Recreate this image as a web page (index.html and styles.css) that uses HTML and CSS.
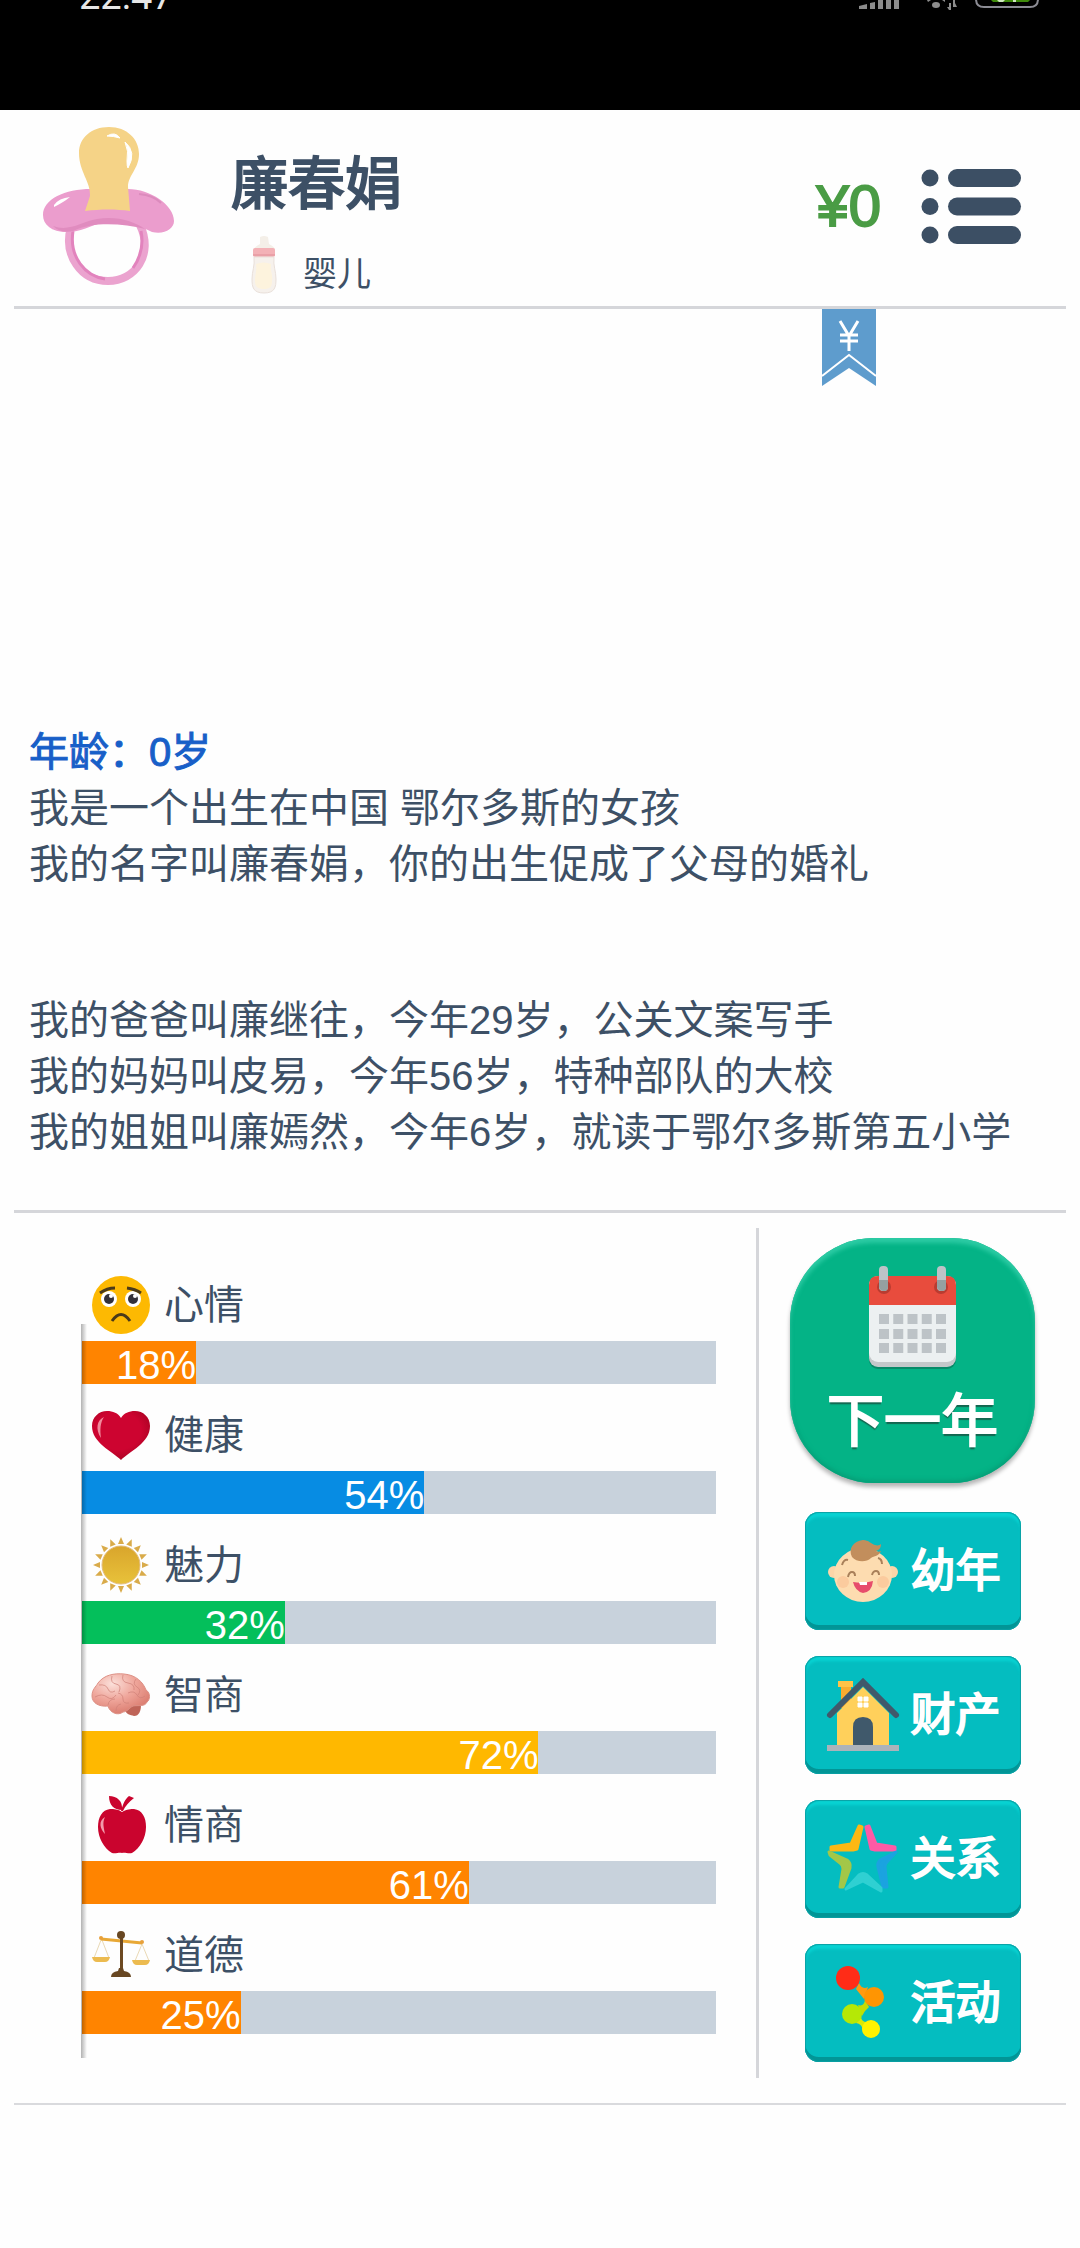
FILE: index.html
```html
<!DOCTYPE html>
<html lang="zh-CN">
<head>
<meta charset="utf-8">
<meta name="viewport" content="width=device-width, initial-scale=1">
<title>人生模拟</title>
<link rel="stylesheet" href="styles.css">
</head>
<body>
<div class="statusbar">
  <span class="clock">22:47</span>
  <svg class="status-icons" width="182" height="12" viewBox="0 0 182 12" aria-hidden="true">
    <g fill="#8c8c8c">
      <path d="M0 6l8-2v5H0zM11 3l5-1v7h-5zM19 0h5v9h-5zM27 0h5v9h-5zM35 0h5v9h-5z"/>
      <ellipse cx="77" cy="5" rx="4" ry="3"/>
      <path d="M68 0h4l-3 2zM83 0h3v2z"/>
      <path d="M90 3h2v7h-2l-2-3h2zM94 0v7h4l-2-4v-3z"/>
    </g>
    <path d="M117-6h62v5q0 8-8 8h-46q-8 0-8-8z" fill="none" stroke="#8c8c94" stroke-width="2"/>
    <path d="M130-2h43l-4 4h-35z" fill="#3f8a0b"/>
    <path d="M138 0h8l-2 2h-4zM154 0h3v2h-3z" fill="#cfe8c0"/>
  </svg>
</div>

<header class="profile">
  <svg class="avatar" width="132" height="158" viewBox="0 0 132 158" aria-hidden="true">
    <path d="M28 100C20 128 38 154 65 154S111 128 97 98" fill="none" stroke="#eba3cf" stroke-width="8"/>
    <path d="M30 104C26 130 42 149 62 152M98 104q4 20-8 37" fill="none" stroke="#e283bd" stroke-width="3"/>
    <path d="M0 88C0 72 22 62 48 62h37c22 0 46 16 46 32 0 8-10 14-22 11-14-7-28-10-42-10-16 0-24 9-40 10C9 106 0 98 0 88z" fill="#eb9dcd"/>
    <path d="M10 99c16 6 28-4 44-7 20-3 36 2 48 10-22-5-50-8-72 2-8 2-15 0-20-5z" fill="#e08cbf"/>
    <path d="M42 84l5-15c1-14-11-24-11-43C36 11 48 0 66 0s30 12 30 27c0 15-11 21-11 33l2 24c-14-2-29-2-45 0z" fill="#f5d387"/>
    <path d="M64 9q8-5 13 2-7-2-13-2zM82 15q12 10 3 26-1-1-1-7 2-10-2-19z" fill="#fff" stroke="#fff"/>
    <path d="M11 78q5-7 16-8-6 5-16 10z" fill="#fff"/>
    <path d="M96 67q14 1 22 9" fill="none" stroke="#dc8bbd" stroke-width="2"/>
  </svg>
  <div class="who">
    <h1 class="name">廉春娟</h1>
    <p class="stage">
      <svg width="26" height="58" viewBox="0 0 26 58" aria-hidden="true">
        <path d="M9 1q4-2 8 0l1 7c4 2 6 4 6 6H3c0-2 2-4 6-6z" fill="#f4efe8"/>
        <rect x="2" y="12" width="22" height="9" rx="2" fill="#f3b1b6"/>
        <path d="M2 19h22" stroke="#e08f98"/>
        <path d="M3 21h20c-1 9 2 14 2 22 0 8-1 14-12 14S1 51 1 43c0-8 3-13 2-22z" fill="#f6f1ec" stroke="#e9e0da"/>
        <path d="M5 28q8-3 15 0c-1 8 2 10 1 17 0 6-2 8-8 8s-9-2-9-8c0-7 2-9 1-17z" fill="#fdf3dd"/>
      </svg>
      <span>婴儿</span>
    </p>
  </div>
  <span class="money">¥0</span>
  <button class="menu" type="button" aria-label="菜单">
    <svg width="101" height="75" viewBox="0 0 101 75" fill="#3c4f64" aria-hidden="true">
      <circle cx="9" cy="9" r="8.5"/><circle cx="9" cy="37.5" r="8.5"/><circle cx="9" cy="66" r="8.5"/>
      <rect x="27" width="73" height="18" rx="9"/><rect x="27" y="28.5" width="73" height="18" rx="9"/><rect x="27" y="57" width="73" height="18" rx="9"/>
    </svg>
  </button>
</header>

<main class="log">
  <svg class="ribbon" width="54" height="77" viewBox="0 0 54 77" aria-hidden="true">
    <path d="M0 0h54v77L27 59 0 77z" fill="#5e9ccd"/>
    <path d="M0 67l27-21 27 21" fill="none" stroke="#fff" stroke-width="2"/>
    <path d="M18 12l9 15 9-15M27 26v16M18 26h18M18 32h18" fill="none" stroke="#fff" stroke-width="3"/>
  </svg>
  <h2 class="age">年龄：0岁</h2>
  <p>我是一个出生在中国 鄂尔多斯的女孩</p>
  <p>我的名字叫廉春娟，你的出生促成了父母的婚礼</p>
  <p class="family">我的爸爸叫廉继往，今年29岁，公关文案写手</p>
  <p>我的妈妈叫皮易，今年56岁，特种部队的大校</p>
  <p>我的姐姐叫廉嫣然，今年6岁，就读于鄂尔多斯第五小学</p>
</main>

<section class="panel">
  <ul class="stats">
    <li class="stat">
      <div class="stat-head">
        <svg width="58" height="58" viewBox="0 0 58 58" aria-hidden="true">
          <circle cx="29" cy="29" r="29" fill="#fdb902"/>
          <circle cx="17" cy="23" r="8" fill="#fff"/><circle cx="41" cy="23" r="8" fill="#fff"/>
          <circle cx="17" cy="23" r="5" fill="#33313a"/><circle cx="41" cy="23" r="5" fill="#33313a"/>
          <circle cx="19" cy="20" r="2" fill="#fff"/><circle cx="43" cy="20" r="2" fill="#fff"/>
          <path d="M8 17q7-5 15-5M35 12q8 1 14 5M20 45q9-13 18 0" fill="none" stroke="#4a3a1a" stroke-width="3"/>
        </svg>
        <span>心情</span>
      </div>
      <div class="track"><div class="fill orange" style="width:18%">18%</div></div>
    </li>
    <li class="stat">
      <div class="stat-head">
        <svg width="58" height="58" viewBox="0 0 58 58" aria-hidden="true">
          <defs><radialGradient id="heart" cx=".45" cy=".4" r=".65"><stop offset=".6" stop-color="#cd0430"/><stop offset="1" stop-color="#a60322"/></radialGradient></defs>
          <path d="M29 54C20 45 0 37 0 20 0 11 7 5 15 5c6 0 11 2 14 7 3-5 8-7 14-7 8 0 15 6 15 15 0 17-20 25-29 34z" fill="url(#heart)"/>
          <path d="M12 11c-7 3-9 12-3 21-1-8-1-15 3-21z" fill="#f08a9c"/>
        </svg>
        <span>健康</span>
      </div>
      <div class="track"><div class="fill blue" style="width:54%">54%</div></div>
    </li>
    <li class="stat">
      <div class="stat-head">
        <svg width="58" height="58" viewBox="-29 -29 58 58" aria-hidden="true">
          <defs>
            <linearGradient id="sun" x1="0" y1="0" x2="0" y2="1"><stop offset="0" stop-color="#d9a52c"/><stop offset="1" stop-color="#e8c23a"/></linearGradient>
            <g id="rays"><path id="ray" d="M-3-21L0-28l3 7z"/><use href="#ray" transform="rotate(22.5)"/><use href="#ray" transform="rotate(45)"/><use href="#ray" transform="rotate(67.5)"/></g>
          </defs>
          <g fill="#d9ab4a"><use href="#rays"/><use href="#rays" transform="rotate(90)"/><use href="#rays" transform="rotate(180)"/><use href="#rays" transform="rotate(270)"/></g>
          <circle r="19" fill="url(#sun)" stroke="#e3bb78"/>
        </svg>
        <span>魅力</span>
      </div>
      <div class="track"><div class="fill green" style="width:32%">32%</div></div>
    </li>
    <li class="stat">
      <div class="stat-head">
        <svg width="58" height="58" viewBox="0 0 58 58" aria-hidden="true">
          <defs><radialGradient id="brain" cx=".35" cy=".25" r=".8"><stop offset="0" stop-color="#fbe0da"/><stop offset=".5" stop-color="#efa69b"/><stop offset="1" stop-color="#d9796c"/></radialGradient></defs>
          <path d="M33 44c4-5 10-7 16-5 0 6-2 11-7 11-4-1-8-2-9-6z" fill="#bf6458"/>
          <path d="M16 40C7 41 0 37 0 30c0-7 4-9 6-13C12 9 22 7 32 8c12 1 19 8 22 16 5 3 4 10 1 12-2 5-9 3-14 4-4 2-6 6-10 6-5 4-13 1-15-6z" fill="url(#brain)" stroke="#dd9186"/>
          <path d="M7 19q7-1 9 4t7 2M20 10q-2 7 4 8t3 8M31 9q-2 7 5 8t6 7M44 13q-4 5 1 8t1 8M3 31q7-4 12 0t9-2M26 27q5 1 5 6t6 4M36 27q6-3 9 2t8 1M16 39q1-6 7-6M24 45q0-6 5-7" fill="none" stroke="#cf8077" stroke-opacity=".7"/>
        </svg>
        <span>智商</span>
      </div>
      <div class="track"><div class="fill amber" style="width:72%">72%</div></div>
    </li>
    <li class="stat">
      <div class="stat-head">
        <svg width="58" height="58" viewBox="0 0 58 58" aria-hidden="true">
          <g fill="#ca042e">
            <path d="M17 0c8 0 14 5 13 14-8 0-13-5-13-14zM29 15C31 8 33 3 37 0l5 2c-5 4-9 8-11 13z"/>
            <path d="M30 16c5-3 9-3 12-3 8 1 12 8 12 18 0 11-6 21-14 26-4 1-7-1-10 0-3-1-6 1-10 0C12 52 6 42 6 31c0-10 4-17 12-18 4 0 8 0 12 3z"/>
          </g>
          <path d="M13 21c-7 4-5 12 0 17-1-6-3-11 0-17z" fill="#f29bab"/>
        </svg>
        <span>情商</span>
      </div>
      <div class="track"><div class="fill orange" style="width:61%">61%</div></div>
    </li>
    <li class="stat">
      <div class="stat-head">
        <svg width="58" height="58" viewBox="0 0 58 58" aria-hidden="true">
          <path d="M9 14L2 32M10 14l7 18M50 18l-7 17M50 18l7 17" fill="none" stroke="#ead9b5"/>
          <path d="M9 13l41 4" stroke="#e8a836" stroke-width="3"/>
          <circle cx="9" cy="12" r="2" fill="#e8a03a"/><circle cx="50" cy="16" r="2" fill="#e8a03a"/>
          <path d="M0 31h18q-1 5-5 5H5q-4 0-5-5zM40 34h18q-1 5-5 5h-8q-4 0-5-5z" fill="#ecbb50"/>
          <path d="M28 10h3v33h-3z" fill="#6d4a22"/><circle cx="29" cy="9" r="4" fill="#684722"/>
          <path d="M19 51q0-5 7-6l1-3h4l1 3q7 1 7 6z" fill="#684722"/>
        </svg>
        <span>道德</span>
      </div>
      <div class="track"><div class="fill orange" style="width:25%">25%</div></div>
    </li>
  </ul>

  <nav class="actions">
    <button class="next" type="button">
      <svg width="87" height="104" viewBox="0 0 87 104" aria-hidden="true">
        <rect y="14" width="87" height="89" rx="9" fill="#078a68"/>
        <rect y="14" width="87" height="87" rx="9" fill="#c4c8ca"/>
        <rect y="10" width="87" height="86" rx="9" fill="#ecf0f1"/>
        <path d="M0 39V19q0-9 9-9h69q9 0 9 9v20z" fill="#e84c3d"/>
        <circle cx="15" cy="21" r="7" fill="#b93c31"/><circle cx="72" cy="21" r="7" fill="#b93c31"/>
        <rect x="10" width="9" height="25" rx="4" fill="#bdc3c7"/><rect x="68" width="9" height="25" rx="4" fill="#bdc3c7"/>
        <path d="M10 14h9v7q0 4-4 4t-5-4zM68 14h9v7q0 4-4 4t-5-4z" fill="#95a0a1"/>
        <path d="M10 53h67M10 68h67M10 82h67" stroke="#bdc3c7" stroke-width="10" stroke-dasharray="10 4.25"/>
      </svg>
      <span>下一年</span>
    </button>
    <button class="action" type="button">
      <svg width="72" height="72" viewBox="0 0 72 72" aria-hidden="true">
        <circle cx="7" cy="38" r="6" fill="#fcd5a8"/><circle cx="65" cy="38" r="6" fill="#fcd5a8"/>
        <ellipse cx="36" cy="41" rx="29" ry="27" fill="#fddcb0"/>
        <circle cx="16" cy="48" r="6" fill="#fbcb9e"/><circle cx="56" cy="48" r="6" fill="#fbcb9e"/>
        <path d="M25 23C21 15 26 7 36 6c6 0 8 4 12 5 3 1 5 0 6-1 0 4-2 6-5 7 2 1 3 1 5 0-2 5-7 5-10 7-5 5-15 4-19-1z" fill="#c28e5c"/>
        <path d="M15 31q2-6 6-5M51 24q4 1 4 6M21 43q1-5 4-5t3 4M45 41q1-4 4-4t3 4" fill="none" stroke="#a9805a" stroke-width="2"/>
        <path d="M26 48q10 2 20-1-1 11-10 12-8-2-10-11z" fill="#e74c6c"/><path d="M32 48h8v3h-7z" fill="#fff"/>
      </svg>
      <span>幼年</span>
    </button>
    <button class="action" type="button">
      <svg width="72" height="73" viewBox="0 0 72 73" aria-hidden="true">
        <path d="M14 8h10v22H14z" fill="#f9ac2f"/><path d="M11 3h15v6H11z" fill="#ffc348"/>
        <path d="M10 35L36 9l26 26v32H10z" fill="#ffd05b"/>
        <path d="M3 37L36 4l33 33" fill="none" stroke="#40596b" stroke-width="6" stroke-linecap="round"/>
        <path d="M26 67V49q0-10 10-10t10 10v18z" fill="#40596b"/>
        <path d="M31 19h4v4h-4zM37 19h4v4h-4zM31 25h4v4h-4zM37 25h4v4h-4z" fill="#fff" stroke="#fff"/>
        <path d="M0 67h72v6H0z" fill="#acb3ba"/>
      </svg>
      <span>财产</span>
    </button>
    <button class="action" type="button">
      <svg width="72" height="72" viewBox="0 0 72 72" stroke-width="3" stroke-linejoin="round" aria-hidden="true">
        <path d="M32 4l3 1-5 22-4 1H4v-3l20-3z" fill="#fdb813" stroke="#fdb813"/>
        <path d="M42 4l-3 1 5 22 4 1h20v-3l-19-3z" fill="#ff5aa5" stroke="#ff5aa5"/>
        <path d="M69 30L53 38q-3 3-2 7l5 20h4l-2-20q0-3 2-5z" fill="#1ba3e0" stroke="#1ba3e0"/>
        <path d="M2 30l18 8q4 3 3 8l-7 19h-3l3-18q0-4-3-6L3 33z" fill="#a3c748" stroke="#a3c748"/>
        <path d="M19 67l13-14q4-3 8 0l14 13v3L36 59z" fill="#2fd0d2" stroke="#2fd0d2"/>
      </svg>
      <span>关系</span>
    </button>
    <button class="action" type="button">
      <svg width="72" height="74" viewBox="0 0 72 74" aria-hidden="true">
        <path d="M32 18q3 7 9 4l-4 12-8-10z" fill="#ff9a10"/>
        <path d="M38 35q-1 7-7 5l4 11q2-5 7-9z" fill="#c4dc05"/>
        <path d="M34 51q0 6 6 6l-4 8q-1-6-7-7z" fill="#dce805"/>
        <circle cx="21" cy="13" r="12" fill="#ff2c17"/><circle cx="47" cy="32" r="10" fill="#ff9502"/>
        <circle cx="25" cy="49" r="10" fill="#b5e806"/><circle cx="44" cy="64" r="9" fill="#fff200"/>
      </svg>
      <span>活动</span>
    </button>
  </nav>
</section>
</body>
</html>
```
FILE: styles.css
```css
* { box-sizing: border-box; }

body {
  margin: 0;
  min-height: 100vh;
  display: flex;
  flex-direction: column;
  background: #fefefe;
  color: #3d5066;
  font-family: "Liberation Sans", "Noto Sans CJK SC", sans-serif;
  font-size: 40px;
  line-height: 56px;
}

h1, h2, p, ul { margin: 0; padding: 0; }
svg { display: block; flex: none; overflow: visible; }
button { border: 0; padding: 0; background: none; font: inherit; color: inherit; cursor: pointer; }

/* system status strip */
.statusbar {
  display: flex;
  justify-content: space-between;
  align-items: flex-start;
  height: 110px;
  padding: 0 39px 0 79px;
  overflow: hidden;
  background: #000;
  color: #e6e6e6;
}
.statusbar .status-icons { overflow: hidden; }
.clock {
  margin-top: -24px;
  font-family: Roboto, sans-serif;
  font-size: 38px;
  line-height: 40px;
}

/* profile header */
.profile {
  display: flex;
  align-items: center;
  height: 199px;
  margin: 0 14px;
  padding: 0 44px 4px 29px;
  border-bottom: 3px solid #d5d6da;
}
.who { flex: 1; padding: 28px 0 0 56px; }
.name {
  margin-bottom: 14px;
  font-size: 57px;
  line-height: 76px;
  font-weight: 400;
  -webkit-text-stroke: 2px #3d5066;
}
.stage {
  display: flex;
  align-items: flex-end;
  gap: 26px;
  padding-left: 20px;
  font-size: 34px;
  line-height: 40px;
}
.money {
  margin-right: 40px;
  color: #4a9c45;
  font-size: 58px;
  -webkit-text-stroke: 2px #4a9c45;
}

/* life log */
.log {
  position: relative;
  flex: 1;
  display: flex;
  flex-direction: column;
  justify-content: flex-end;
  margin: 0 14px;
  padding: 80px 15px 50px;
  border-bottom: 3px solid #d5d6da;
}
.ribbon { position: absolute; top: 0; right: 190px; }
.age {
  color: #185fc8;
  font-size: 40px;
  font-weight: 400;
  -webkit-text-stroke: 1px #185fc8;
}
.family { margin-top: 100px; }

/* stats and actions */
.panel {
  display: grid;
  grid-template-columns: 1fr 310px;
  margin: 0 14px 143px;
  padding: 15px 0 25px;
  border-bottom: 2px solid #d9dadd;
}
.stats {
  position: relative;
  display: flex;
  flex-direction: column;
  gap: 22px;
  padding: 48px 40px 0 68px;
  list-style: none;
}
.stats::after {
  content: "";
  position: absolute;
  left: 67px;
  top: 96px;
  bottom: 20px;
  width: 6px;
  background: linear-gradient(90deg, rgba(0, 0, 0, .3), rgba(0, 0, 0, 0));
}
.stat-head {
  display: flex;
  align-items: center;
  gap: 14px;
  height: 58px;
  margin: 0 0 7px 10px;
}
.track { height: 43px; background: #c8d2dc; }
.fill { height: 100%; line-height: 48px; text-align: right; color: #fff; }
.orange { background: #ff8400; }
.blue { background: #078ce3; }
.green { background: #04bf5b; }
.amber { background: #ffb800; }

.actions {
  display: flex;
  flex-direction: column;
  align-items: center;
  gap: 26px;
  padding: 10px 0 16px;
  border-left: 3px solid #d5d6da;
}
.next {
  display: flex;
  flex-direction: column;
  align-items: center;
  width: 245px;
  height: 245px;
  margin-bottom: 3px;
  padding-top: 28px;
  border-radius: 84px;
  background: #04b386;
  box-shadow: 0 4px 4px #b5b5b5, inset 0 5px 4px #2ccba4, inset 0 -3px 4px #06a078;
  color: #fff;
  font-size: 57px;
  line-height: 102px;
  font-weight: 400;
  text-shadow: 0 3px 1px #146650;
  -webkit-text-stroke: 2px #fff;
}
.action {
  display: flex;
  align-items: center;
  gap: 12px;
  width: 216px;
  height: 118px;
  padding: 2px 0 0 22px;
  border-radius: 14px;
  background: #04bdc0;
  box-shadow: inset 0 0 1px 1px #0a9fa3, inset 0 -5px #029596, inset 0 5px 3px #08d3d3;
  color: #fff;
  font-size: 45px;
  font-weight: 400;
  text-shadow: 0 -1px 1px #07696c;
  -webkit-text-stroke: 2px #fff;
}
.action svg { margin-bottom: 4px; }
```
